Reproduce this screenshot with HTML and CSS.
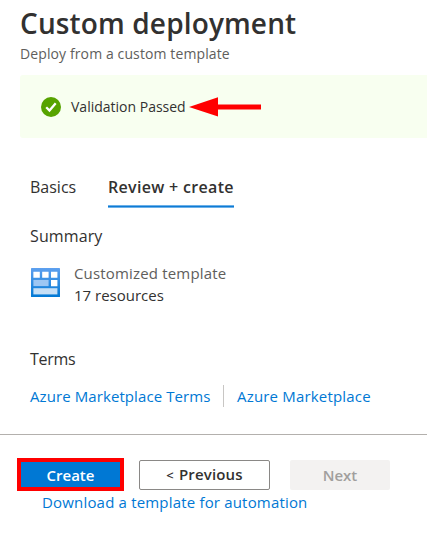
FILE: index.html
```html
<!DOCTYPE html>
<html lang="en">
<head>
<meta charset="utf-8">
<title>Custom deployment</title>
<link rel="stylesheet" href="styles.css">
</head>
<body>
<header class="header">
  <h1 class="title">Custom deployment</h1>
  <p class="subtitle">Deploy from a custom template</p>
</header>
<div class="banner">
  <svg class="check" width="20" height="20" viewBox="0 0 20 20"><circle cx="10" cy="10" r="10" fill="#57a300"/><path d="M5.2 10.2l3.3 3.3 6.2-7.2" fill="none" stroke="#fff" stroke-width="2.3"/></svg>
  <span class="status">Validation Passed</span>
  <svg class="arrow" width="72" height="20" viewBox="0 0 72 20"><path d="M0 10L29 0.3V7.5H72V12.5H29V19.5Z" fill="#f00"/></svg>
</div>
<main class="content">
  <nav class="tabs">
    <span class="tab basics">Basics</span>
    <span class="tab active">Review + create</span>
  </nav>
  <h2 class="heading summary">Summary</h2>
  <div class="template">
    <svg class="template-icon" width="29" height="29" viewBox="0 0 28 28">
      <defs>
        <linearGradient id="frame" x1="0" y1="0" x2="0" y2="1"><stop offset="0" stop-color="#5ea0ef"/><stop offset="1" stop-color="#0078d4"/></linearGradient>
      </defs>
      <rect width="28" height="28" rx=".6" fill="url(#frame)"/>
      <path d="M2.3 3.5h6.2v6H2.3zM10.8 3.5H17v6h-6.2zM19.3 3.5h6.2v6h-6.2zM19.3 11.5h6.2v6h-6.2z" fill="#fff"/>
      <path d="M2.3 11.5H17v6H2.3z" fill="#9cc6f3"/>
      <path d="M2.3 19.5h23.2v6H2.3z" fill="#c5dff6"/>
    </svg>
    <div class="template-text">
      <div class="template-name">Customized template</div>
      <div class="resources">17 resources</div>
    </div>
  </div>
  <h2 class="heading terms">Terms</h2>
  <div class="links">
    <a class="link terms-link">Azure Marketplace Terms</a>
    <a class="link market-link">Azure Marketplace</a>
  </div>
</main>
<footer class="footer">
  <div class="buttons">
    <button class="button create">Create</button>
    <button class="button previous"><span class="chevron">&lt;</span> Previous</button>
    <button class="button next" disabled>Next</button>
  </div>
  <a class="link download">Download a template for automation</a>
</footer>
</body>
</html>
```
FILE: styles.css
```css
* { box-sizing: border-box; }
body {
  margin: 0;
  height: 533px;
  overflow: hidden;
  background: #fff;
  color: #323130;
  font-family: "Open Sans", "Noto Sans", sans-serif;
  font-size: 15px;
  white-space: nowrap;
}
h1, h2, p { margin: 0; font-weight: 400; }
.header { height: 75px; padding: 3px 0 0 20px; }
.title { font-size: 28px; line-height: 40px; font-weight: 600; letter-spacing: 0.14px; }
.subtitle { font-size: 14px; line-height: 22px; color: #605e5c; letter-spacing: 0.11px; }
.banner {
  display: flex;
  align-items: center;
  height: 63px;
  margin-left: 20px;
  padding-left: 21px;
  background: #f8fff0;
  border-radius: 3px 0 0 3px;
}
.status { width: 118px; margin-left: 10px; font-size: 14px; line-height: 20px; }
.content { padding: 37px 0 0 30px; height: 296px; }
.tabs { display: flex; gap: 32px; height: 33px; font-size: 16px; line-height: 24px; }
.tab { height: 33px; }
.basics { width: 46px; }
.active {
  width: 126px;
  font-weight: 600;
  letter-spacing: 0.32px;
  background: linear-gradient(#6bb0e8 0 1px, #0f7bd4 1px 2px, #6bb0e8 2px 3px) bottom / 100% 3px no-repeat;
}
.heading { font-size: 16px; line-height: 24px; }
.summary { margin-top: 16px; letter-spacing: 0.12px; }
.template { display: flex; gap: 14px; margin: 14px 0 0 1px; }
.template-icon { margin-top: 6px; }
.template-text { line-height: 22px; }
.template-name { color: #605e5c; letter-spacing: 0.17px; }
.terms { margin-top: 41px; letter-spacing: -0.3px; }
.links { display: flex; margin-top: 14px; line-height: 22px; }
.link { color: #0078d4; }
.terms-link { width: 194px; border-right: 1px solid #c8c6c4; letter-spacing: 0.09px; }
.market-link { padding-left: 13px; letter-spacing: 0.18px; }
.footer { border-top: 1px solid #b3b0ad; padding: 23px 0 0 17px; }
.buttons { display: flex; align-items: center; }
.button {
  height: 30px;
  padding: 0;
  border: 1px solid #8a8886;
  border-radius: 2px;
  background: #fff;
  color: #323130;
  font: 600 15px/22px "Open Sans", "Noto Sans", sans-serif;
}
.create { width: 107px; height: 33px; border: 4px solid #f00; border-radius: 0; background: #0078d4; color: #fff; }
.previous { width: 131px; margin-left: 15px; letter-spacing: 0.15px; }
.chevron { margin-right: 1px; font-size: 13px; }
.next { width: 100px; margin-left: 20px; border: 0; background: #f3f2f1; color: #a19f9d; }
.download { display: block; margin-left: 25px; line-height: 22px; letter-spacing: 0.18px; }
```
